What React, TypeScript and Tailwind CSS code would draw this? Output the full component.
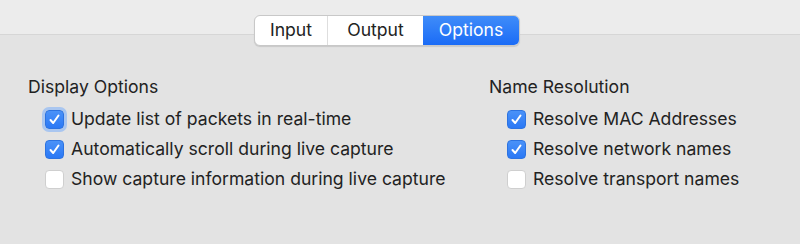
import React from "react";

function Check({ checked, focus }: { checked: boolean; focus?: boolean }) {
  return (
    <span
      className={
        "relative flex h-[19px] w-[19px] shrink-0 items-center justify-center rounded-[4px] " +
        (checked
          ? "bg-gradient-to-b from-[#4a92f8] to-[#2a78f5] border border-[#2d73e0]"
          : "bg-white border border-[#cfcfcf]") +
        (focus ? " ring-[3px] ring-[#a9c6f0]" : "")
      }
    >
      {checked && (
        <svg width="13" height="13" viewBox="0 0 13 13" fill="none">
          <path
            d="M2.5 7 L5.2 10 L10.5 2.5"
            stroke="white"
            strokeWidth="2"
            strokeLinecap="round"
            strokeLinejoin="round"
          />
        </svg>
      )}
    </span>
  );
}

function Row({ label, checked, focus }: { label: string; checked: boolean; focus?: boolean }) {
  return (
    <div className="flex h-[30px] items-center gap-[7px]">
      <Check checked={checked} focus={focus} />
      <span>{label}</span>
    </div>
  );
}

export default function App() {
  return (
    <div
      className="relative h-[244px] w-[800px] overflow-hidden bg-[#e3e3e3] text-[17.6px] text-[#222222]"
      style={{ fontFamily: "Inter, 'Noto Sans', sans-serif" }}
    >
      <div className="h-[35px] border-b border-[#d6d6d6] bg-[#ececec]" />
      <div className="absolute left-[254px] top-[15px] flex h-[31px] overflow-hidden rounded-[6px] border border-[#c8c8c8] bg-white text-[17.6px] shadow-[0_1px_1px_rgba(0,0,0,0.12)]">
        <div className="flex w-[73px] items-center justify-center border-r border-[#dedede]">Input</div>
        <div className="flex w-[95px] items-center justify-center">Output</div>
        <div className="flex w-[96px] items-center justify-center bg-gradient-to-b from-[#3f8cf9] to-[#1a6bf6] text-white">Options</div>
      </div>
      <div className="flex pt-[37px]">
        <div className="ml-[28px] w-[461px]">
          <div className="flex h-[30px] items-center">Display Options</div>
          <div className="ml-[17px] mt-[2px]">
            <Row label="Update list of packets in real-time" checked focus />
            <Row label="Automatically scroll during live capture" checked />
            <Row label="Show capture information during live capture" checked={false} />
          </div>
        </div>
        <div>
          <div className="flex h-[30px] items-center">Name Resolution</div>
          <div className="ml-[18px] mt-[2px]">
            <Row label="Resolve MAC Addresses" checked />
            <Row label="Resolve network names" checked />
            <Row label="Resolve transport names" checked={false} />
          </div>
        </div>
      </div>
    </div>
  );
}
